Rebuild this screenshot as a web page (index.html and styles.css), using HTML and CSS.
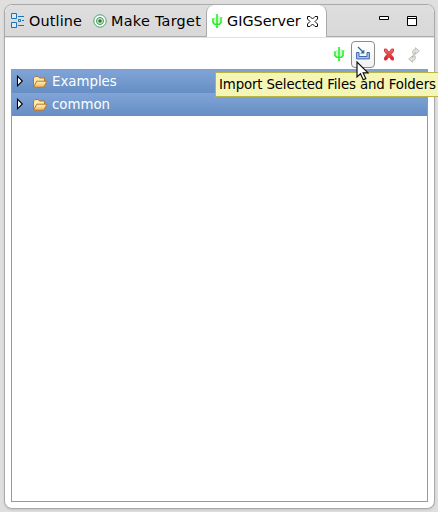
FILE: index.html
```html
<!DOCTYPE html>
<html lang="en">
<head>
<meta charset="utf-8">
<title>GIGServer</title>
<link rel="stylesheet" href="styles.css">
</head>
<body>
<svg class="defs" width="0" height="0">
  <defs>
    <linearGradient id="fold" x1="0" y1="0" x2="0" y2="1"><stop offset="0" stop-color="#fff3c4"/><stop offset="1" stop-color="#f0b85a"/></linearGradient>
    <linearGradient id="red" x1="0" y1="0" x2="0" y2="1"><stop offset="0" stop-color="#f07070"/><stop offset="1" stop-color="#d41c24"/></linearGradient>
    <symbol id="cactus" viewBox="0 0 12 16">
      <path d="M4 4v6M8 3v7M.5 5.500h3M9 4.500h2.600M4.500 13.500h3" fill="none" stroke="#a5f5a5" stroke-width="1"/>
      <path d="M6 1v14M2 5.500V9.500L3.500 11.300H8.500L10 9.500V4.500" fill="none" stroke="#22f022" stroke-width="1.600"/>
    </symbol>
    <symbol id="folder" viewBox="0 0 16 14">
      <path d="M1.500 12V3L3 1.500h3L7.500 3H12.500V6" fill="#ffe9a8" stroke="#b5762b"/>
      <path d="M1.500 12.200 4.800 6.200H15l-3.200 6z" fill="url(#fold)" stroke="#b5762b" stroke-linejoin="round"/>
    </symbol>
    <symbol id="arrow" viewBox="0 0 8 12"><path d="M1.500 1.200V10.800L6.300 6z" fill="#fff" stroke="#000" stroke-width="1.100"/></symbol>
  </defs>
</svg>
<main class="view">
  <header class="tabs">
    <div class="tab outline">
      <svg width="14" height="16" viewBox="0 0 14 16"><g fill="#d5ecfa" stroke="#1c73b5"><path d="M.5.5h5v5h-5zM.5 9.500h5v5h-5z"/><path d="M7.500 6.500h2v2h-2z"/><path d="M7 3.500h6M11 7.500h2M7 12.500h6"/></g></svg>
      <span>Outline</span>
    </div>
    <div class="tab target">
      <svg width="14" height="14" viewBox="0 0 14 14"><circle cx="7" cy="7" r="6.200" fill="#fff" stroke="#48a06a"/><circle cx="7" cy="7" r="3.500" fill="#d8f0d8" stroke="#39935b"/><circle cx="7" cy="7" r="1.800" fill="#258022"/></svg>
      <span>Make Target</span>
    </div>
    <div class="tab active">
      <svg width="12" height="16"><use href="#cactus"/></svg>
      <span>GIGServer</span>
      <svg class="close" width="11" height="11" viewBox="0 0 11 11"><path d="M.5.5h2.500L5.500 3 8 .5h2.500V3L8 5.500 10.500 8v2.500H8L5.500 8 3 10.500H.5V8L3 5.500.5 3z" fill="#fff" stroke="#111"/></svg>
    </div>
    <div class="window-buttons">
      <svg width="10" height="4" viewBox="0 0 10 4"><path d="M.5.5h9v3h-9z" fill="#fff" stroke="#000"/></svg>
      <svg width="10" height="10" viewBox="0 0 10 10"><path d="M.5.5h9v9h-9zM0 2.500h10" fill="#fff" stroke="#000"/></svg>
    </div>
  </header>
  <div class="toolbar">
    <svg class="tool-cactus" width="12" height="16"><use href="#cactus"/></svg>
    <div class="button">
      <svg width="14" height="14" viewBox="0 0 14 14"><path d="M.6 6.500h2.400v4h8v-4h2.400v6.400H.6z" fill="#a9c4ec" stroke="#3f68b2"/><path d="M2 1 7 6" fill="none" stroke="#276d9c" stroke-width="1.200"/><path d="M8.300 3.500v4H4.300z" fill="#276d9c"/></svg>
    </div>
    <svg class="delete" width="12" height="13" viewBox="0 0 12 13"><path d="M1.500 1h2l2.500 3.500L8.500 1h2v2.500L8 6.500l2.500 3V12h-2L6 8.500 3.500 12h-2V9.500l2.500-3-2.500-3z" fill="url(#red)" stroke="#d83a3e" stroke-linejoin="round"/></svg>
    <svg class="sync" width="12" height="16" viewBox="0 0 12 16"><g fill="#e4e2dc" stroke="#b5b2aa" stroke-width=".8" stroke-linejoin="round"><path d="M5 7.200Q3.500 2.700 7.500 2.500V.7l3.800 3.300-3.800 3.300V5.300Q6.500 5.200 7 7.200z"/><path d="M7 8.800Q8.500 13.300 4.500 13.500V15.300L.7 12l3.800-3.300v2Q5.500 10.800 5 8.800z"/></g></svg>
  </div>
  <div class="tree">
    <div class="row"><svg width="8" height="12"><use href="#arrow"/></svg><svg class="folder" width="16" height="14"><use href="#folder"/></svg><span>Examples</span></div>
    <div class="row"><svg width="8" height="12"><use href="#arrow"/></svg><svg class="folder" width="16" height="14"><use href="#folder"/></svg><span>common</span></div>
  </div>
</main>
<div class="tooltip">Import Selected Files and Folders</div>
<svg class="cursor" width="13" height="20" viewBox="0 0 13 20"><path d="M1 1v15l3.500-3.200 2.700 6 2.600-1.200-2.700-5.800H12z" fill="#fff" stroke="#111" stroke-width="1.200"/></svg>
</body>
</html>
```
FILE: styles.css
```css
* { box-sizing: border-box; }
body {
  margin: 0;
  width: 438px;
  height: 512px;
  padding: 4px 3px 3px 4px;
  overflow: hidden;
  background: #dfdfdf;
  font: 13.33px "DejaVu Sans", sans-serif;
  color: #000;
}
svg { display: block; flex: none; }
.defs { position: absolute; }
.view {
  height: 505px;
  border: 1px solid #aaa;
  border-radius: 8px;
  background: #fff;
  display: flex;
  flex-direction: column;
  overflow: hidden;
  box-shadow: 0 1px 2px #c4c4c4;
}
.tabs {
  height: 33px;
  flex: none;
  display: flex;
  background: linear-gradient(#dedede, #d8d8d8);
  box-shadow: inset 0 -1px #e2e2e2, inset 0 -2px #aaa;
}
.tab { display: flex; align-items: center; white-space: nowrap; height: 32px; font-size: 14.4px; }
.outline { width: 87px; padding-left: 6px; gap: 4px; letter-spacing: .14px; }
.target { width: 114px; padding-left: 1px; gap: 4px; letter-spacing: .28px; }
.active {
  width: 121px;
  padding-left: 4px;
  gap: 4px;
  background: #fff;
  border: solid #aaa;
  border-width: 0 1px;
  border-radius: 8px 8px 0 0;
}
.close { margin-left: 2px; }
.window-buttons { display: flex; align-items: flex-start; gap: 18px; padding: 11px 0 0 52px; }
.toolbar { height: 31px; flex: none; display: flex; align-items: center; padding: 2px 0 0 328px; }
.tool-cactus { margin-bottom: 1px; }
.button {
  width: 24px;
  height: 27px;
  margin-left: 6px;
  border: 1px solid #8c8c8c;
  border-radius: 4px;
  display: flex;
  align-items: center;
  justify-content: center;
  padding-bottom: 3px;
  background: linear-gradient(#fff, #f1f1f1);
}
.delete { margin-left: 8px; }
.sync { margin-left: 13px; }
.tree { height: 433px; margin: 0 6px; border: 1px solid #999; }
.row {
  height: 23px;
  display: flex;
  align-items: center;
  padding: 0 0 1px 4px;
  background: linear-gradient(#80a4d6, #668ec5);
  color: #fff;
}
.folder { margin: 1px 4px 0 8px; }
.tooltip {
  position: absolute;
  left: 215px;
  top: 72px;
  width: 230px;
  height: 25px;
  padding-left: 3px;
  border: 1px solid #b8b545;
  background: #f5f5b5;
  line-height: 23px;
  letter-spacing: -.14px;
  white-space: nowrap;
}
.cursor { position: absolute; left: 356px; top: 61px; }
```
